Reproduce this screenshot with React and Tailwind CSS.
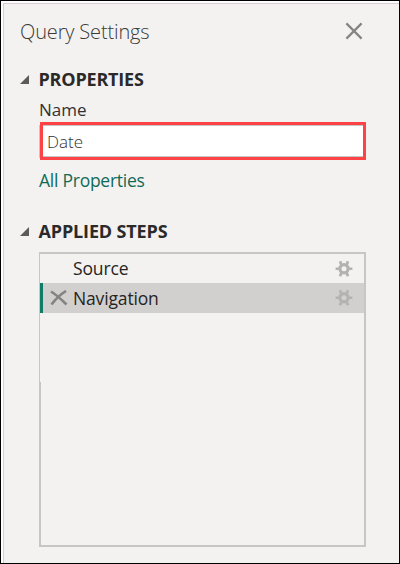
function Gear({ className }) {
  return (
    <svg width="18" height="18" viewBox="0 0 18 18" fill="none" stroke="currentColor" className={className}>
      <circle cx="9" cy="8.7" r="4.1" strokeWidth="3.2" />
      <path d="M0.6 8.7H4.5M13.5 8.7h3.9" strokeWidth="2.6" />
      <path d="M5 1.2l1.5 3.8M11.5 12.4l1.5 3.8M13 1.2l-1.5 3.8M6.5 12.4l-1.5 3.8" strokeWidth="2.8" />
    </svg>
  );
}

function SectionTitle({ children, className }) {
  return (
    <div className="flex h-6 items-center">
      <svg width="9" height="9" viewBox="0 0 9 9" className="mr-[9px] ml-4 shrink-0">
        <path d="M0 9L9 0V9Z" fill="#5c5b5a" />
      </svg>
      <h2 className={"pl-[0.5px] text-[18px] leading-6 font-bold whitespace-nowrap text-[#2b2a29] " + className}>{children}</h2>
    </div>
  );
}

export default function App() {
  return (
    <div className="h-[564px] w-[400px] overflow-hidden border border-black bg-white pt-[2px] pl-[2px] font-['Open_Sans','Noto_Sans',sans-serif]">
      <div className="flex h-full flex-col border-t border-l border-[#d5cdd3] bg-[#f3f2f1]">
        <header className="mt-[14px] flex h-7 items-center justify-between pr-9 pl-4">
          <h1 className="text-[20px] leading-7 font-light tracking-[-0.15px] whitespace-nowrap text-[#3b3a39]">Query Settings</h1>
          <svg width="18" height="18" viewBox="0 0 18 18" className="-mt-[2px] text-[#858483]">
            <path d="M1.4 1.4l15.2 15.2M16.6 1.4L1.4 16.6" stroke="currentColor" strokeWidth="2.2" />
          </svg>
        </header>

        <section className="mt-[21px]">
          <SectionTitle className="tracking-[-0.2px]">PROPERTIES</SectionTitle>
          <label className="mt-[7px] ml-[34px] block h-6 pl-px text-[17px] leading-6 text-[#323130]">Name</label>
          <div className="ml-[35px] flex">
            <div className="h-[33px] w-px self-center bg-[#c8c6c4]" />
            <div className="h-[38px] w-[326px] border-[3px] border-[#fd4345]">
              <div className="h-8 border-y border-[#c8c6c4] bg-white pl-1 text-[17px] leading-[31px] font-light text-[#323130]">Date</div>
            </div>
          </div>
          <a className="mt-[8px] ml-[35px] block h-6 text-[17.5px] leading-6 tracking-[-0.25px] whitespace-nowrap text-[#116a57]">All Properties</a>
        </section>

        <section className="mt-[27px]">
          <SectionTitle className="tracking-[-0.15px]">APPLIED STEPS</SectionTitle>
          <div className="mt-[9px] ml-[35px] flex h-[295px] w-[327px] flex-col border-2 border-[#c8c6c4] text-[17.5px] tracking-[-0.15px] text-[#252423]">
            <div className="-ml-px flex h-[29px] items-center bg-[#f3f2f1] pl-[33px]">
              <span className="leading-[29px]">Source</span>
              <Gear className="mr-[11px] ml-auto text-[#b3b2b1]" />
            </div>
            <div className="-ml-px flex h-[30px] items-center border-l-[3px] border-[#107c67] bg-[#d2d0ce] pl-[7px]">
              <svg width="18" height="16" viewBox="0 0 18 16" className="mr-[5px] text-[#858381]">
                <path d="M1 1.5Q8 6 16.5 14.5M16 1Q8 6 1.5 14.5" fill="none" stroke="currentColor" strokeWidth="2.6" />
              </svg>
              <span className="leading-[30px]">Navigation</span>
              <Gear className="mr-[11px] ml-auto text-[#b5b3b1]" />
            </div>
            <div className="-ml-px h-[69px] bg-[#f3f2f1]" />
          </div>
        </section>
      </div>
    </div>
  );
}
